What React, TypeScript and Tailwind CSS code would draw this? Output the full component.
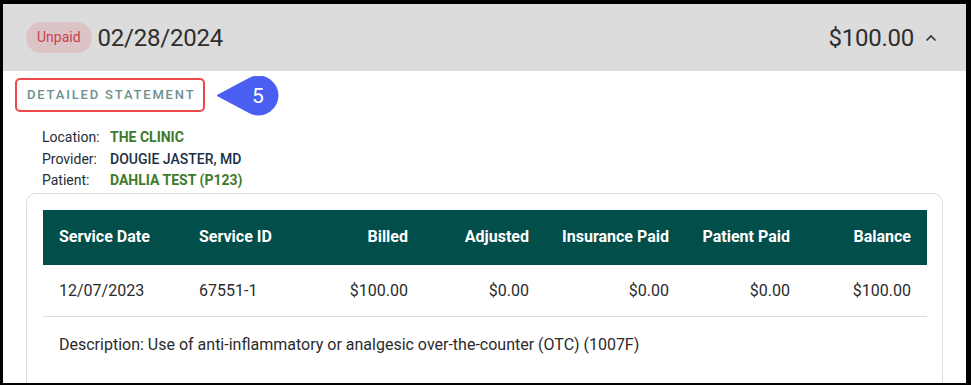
import React from "react";

const cols = [
  { label: "Service Date", value: "12/07/2023", align: "left", w: "140px" },
  { label: "Service ID", value: "67551-1", align: "left", w: "120px" },
  { label: "Billed", value: "$100.00", align: "right", w: "121px" },
  { label: "Adjusted", value: "$0.00", align: "right", w: "121px" },
  { label: "Insurance Paid", value: "$0.00", align: "right", w: "140px" },
  { label: "Patient Paid", value: "$0.00", align: "right", w: "121px" },
  { label: "Balance", value: "$100.00", align: "right", w: "121px" },
];

export default function App() {
  return (
    <div
      className="w-[971px] h-[385px] bg-black pt-[4px] pl-[3px] pr-[5px] pb-[2px] overflow-hidden"
      style={{ fontFamily: "Roboto, 'Liberation Sans', sans-serif" }}
    >
      <div className="w-full h-full bg-white overflow-hidden flex flex-col">
        {/* Header */}
        <div className="h-[67px] shrink-0 bg-[#dcdcdc] flex items-center pl-[23px] pr-[29px]">
          <span className="h-[31px] px-[11px] rounded-full bg-[#dcc4c6] text-[#c8414f] text-[14px] flex items-center">
            Unpaid
          </span>
          <span className="ml-[6px] text-[24px] text-[#2e2e2e] leading-none tracking-[-0.01em]">02/28/2024</span>
          <span className="ml-auto text-[24px] text-[#2e2e2e] leading-none tracking-[-0.01em]">$100.00</span>
          <svg width="12" height="8" viewBox="0 0 12 8" className="ml-[11px] mt-[1px]">
            <path d="M1.5 6.5 L6 2 L10.5 6.5" fill="none" stroke="#333" strokeWidth="1.6" />
          </svg>
        </div>

        {/* Detailed statement label + callout */}
        <div className="flex items-center mt-[7px] ml-[12px] h-[34px]">
          <div className="h-[34px] w-[190px] border-[2.5px] border-[#f0474a] rounded-[5px] flex items-center pl-[10px]">
            <span className="text-[13px] font-medium tracking-[0.14em] text-[#6a918f]">DETAILED STATEMENT</span>
          </div>
          <svg width="62" height="40" viewBox="0 0 62 40" className="ml-[12px] mt-[2px]">
            <path
              d="M0 19.5 L32.3 2.3 A19.5 19.5 0 1 1 32.3 36.7 Z"
              fill="#4a5ff2"
              stroke="#4a5ff2"
              strokeWidth="1"
              strokeLinejoin="round"
            />
            <text
              x="41"
              y="27"
              textAnchor="middle"
              fill="#ffffff"
              fontSize="21"
              fontFamily="Roboto, 'Liberation Sans', sans-serif"
            >
              5
            </text>
          </svg>
        </div>

        {/* Info */}
        <div className="mt-[15px] ml-[39px] text-[14px] leading-[21.5px]">
          <div className="flex">
            <span className="w-[68px] text-[#1f2d3a]">Location:</span>
            <span className="font-bold text-[#3f7a2c]">THE CLINIC</span>
          </div>
          <div className="flex">
            <span className="w-[68px] text-[#1f2d3a]">Provider:</span>
            <span className="font-medium text-[#1a2f45]">DOUGIE JASTER, MD</span>
          </div>
          <div className="flex">
            <span className="w-[68px] text-[#1f2d3a]">Patient:</span>
            <span className="font-bold text-[#3f7a2c]">DAHLIA TEST (P123)</span>
          </div>
        </div>

        {/* Card */}
        <div className="mt-[1px] ml-[23px] mr-[23px] border border-[#dcdcdc] rounded-[10px] pt-[16px] px-[16px] pb-[30px]">
          <div className="w-[884px]">
            <div
              className="grid h-[55px] bg-[#024e4a] items-center"
              style={{ gridTemplateColumns: cols.map((c) => c.w).join(" ") }}
            >
              {cols.map((c) => (
                <div
                  key={c.label}
                  className={`px-[16px] text-[16px] font-bold text-white ${c.align === "right" ? "text-right" : "text-left"}`}
                >
                  {c.label}
                </div>
              ))}
            </div>
            <div
              className="grid h-[52px] pt-[2px] items-center border-b border-[#dddddd]"
              style={{ gridTemplateColumns: cols.map((c) => c.w).join(" ") }}
            >
              {cols.map((c) => (
                <div
                  key={c.label}
                  className={`px-[16px] text-[16px] text-[#2b2b2b] ${c.align === "right" ? "text-right" : "text-left"}`}
                >
                  {c.value}
                </div>
              ))}
            </div>
            <div className="h-[55px] pt-[2px] flex items-center px-[16px] text-[16px] text-[#2b2b2b]">
              Description: Use of anti-inflammatory or analgesic over-the-counter (OTC) (1007F)
            </div>
          </div>
        </div>
      </div>
    </div>
  );
}
